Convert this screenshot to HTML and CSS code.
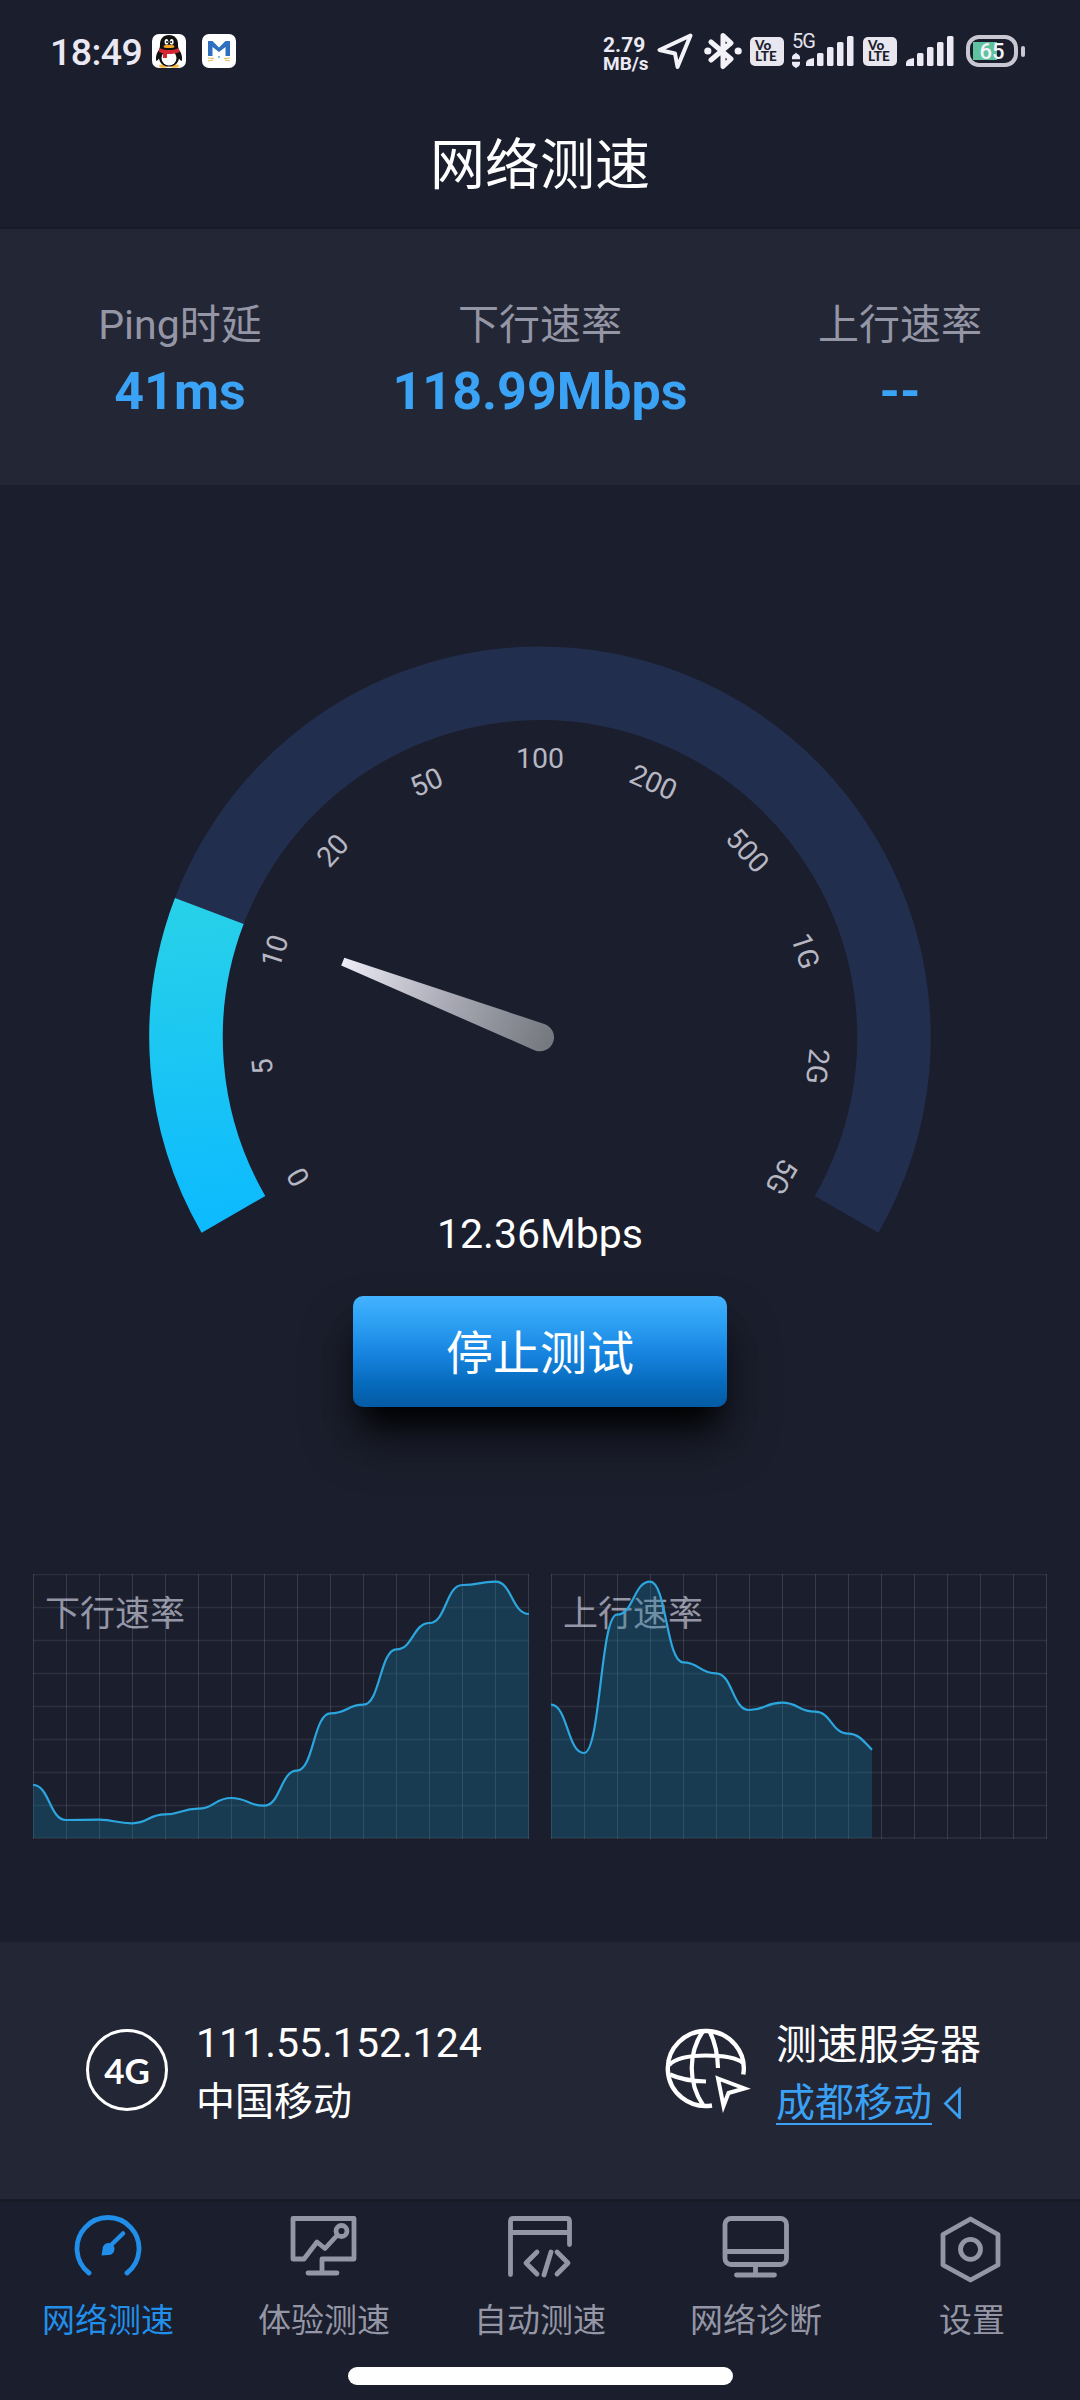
FILE: index.html
```html
<!DOCTYPE html>
<html lang="zh-CN">
<head>
<meta charset="utf-8">
<title>网络测速</title>
<link rel="stylesheet" href="styles.css">
</head>
<body>
<div class="screen">
  <header class="header">
    <div class="status">
      <div class="status-left">
        <span class="clock">18:49</span>
        <svg class="app-icon" viewBox="0 0 34 34">
          <rect width="34" height="34" rx="7" fill="#fff"/>
          <ellipse cx="11.500" cy="32" rx="4.500" ry="1.800" fill="#f5b63c"/><ellipse cx="22.500" cy="32" rx="4.500" ry="1.800" fill="#f5b63c"/>
          <path d="M17 1c-6 0-9 4-9 9 0 2-.2 4-.8 5.500C5 18 3.500 22 4 26.500c1 .8 2-.5 3-2C8 30 12 32.500 17 32.500S26 30 27 24.500c1 1.500 2 2.800 3 2 .5-4.500-1-8.500-3.200-11C26.200 14 26 12 26 10c0-5-3-9-9-9z" fill="#111"/>
          <ellipse cx="17" cy="24" rx="7.500" ry="7.500" fill="#fff"/>
          <ellipse cx="14.500" cy="7.800" rx="1.900" ry="2.900" fill="#fff"/><ellipse cx="19.700" cy="7.800" rx="1.900" ry="2.900" fill="#fff"/>
          <circle cx="15" cy="8" r="1" fill="#111"/><circle cx="19.200" cy="8" r="1" fill="#111"/>
          <ellipse cx="17" cy="12.400" rx="5.500" ry="1.700" fill="#f5a623"/>
          <path d="M7.500 14c6 3 13 3 19 0l1 4c-4 1.800-8 2.200-12.500 2V24h-4v-4.800L7 18z" fill="#d8252f"/>
        </svg>
        <svg class="app-icon app-icon-second" viewBox="0 0 34 34">
          <rect width="34" height="34" rx="7" fill="#fff"/>
          <path d="M6 22V7h4.500l6.500 6.500L23.500 7H28v15h-4.500v-9L17 18l-6.500-5v9z" fill="#2f6fc0"/>
          <path d="M6 24l6 .5M6 27l5-1M28 24l-6 .5M28 27l-5-1" stroke="#e7b94c" stroke-width="1"/>
          <circle cx="17" cy="23" r="1" fill="#5aa7c8"/>
        </svg>
      </div>
      <div class="status-right">
        <div class="net-speed"><span class="net-value">2.79</span><span class="net-unit">MB/s</span></div>
        <svg class="i-send" viewBox="0 0 36 37"><path d="M33.500 2.500L2.500 17l15.500 3.500L20.500 34z" fill="none" stroke="#f2f2f8" stroke-width="4" stroke-linejoin="round"/></svg>
        <svg class="i-bt" viewBox="0 0 38 38"><path d="M7 10l20 17-8 7.500V3.500L27 11 7 28" fill="none" stroke="#f2f2f8" stroke-width="5" stroke-linejoin="round" stroke-linecap="round"/><circle cx="3.800" cy="19" r="3.600" fill="#f2f2f8"/><circle cx="34.200" cy="19" r="3.600" fill="#f2f2f8"/></svg>
        <div class="volte">Vo<br>LTE</div>
        <div class="net-type"><span>5G</span><svg viewBox="0 0 8 17"><path d="M0 7.300a4 4.500 0 0 1 3-5.500L4 .5l1 1.300a4 4.500 0 0 1 3 5.500zM0 9.700h8a4 4.500 0 0 1-3 5.500L4 16.500l-1-1.300a4 4.500 0 0 1-3-5.500z" fill="#eceaf4"/></svg></div>
        <svg class="signal signal-first" viewBox="0 0 48 31"><g fill="#eceaf4"><path d="M0 30v-3q0-4 8-5v8z"/><rect x="11" y="17" width="6.500" height="13" rx="1.500"/><rect x="21" y="11" width="6.500" height="19" rx="1.500"/><rect x="31" y="6" width="6.500" height="24" rx="1.500"/><rect x="41" width="6.500" height="30" rx="1.500"/></g></svg>
        <div class="volte">Vo<br>LTE</div>
        <svg class="signal signal-second" viewBox="0 0 48 31"><g fill="#eceaf4"><path d="M0 30v-3q0-4 8-5v8z"/><rect x="11" y="17" width="6.500" height="13" rx="1.500"/><rect x="21" y="11" width="6.500" height="19" rx="1.500"/><rect x="31" y="6" width="6.500" height="24" rx="1.500"/><rect x="41" width="6.500" height="30" rx="1.500"/></g></svg>
        <div class="battery"><span>65</span></div><i class="battery-cap"></i>
      </div>
    </div>
    <h1 class="title">网络测速</h1>
  </header>

  <section class="stats">
    <div class="stat"><span class="stat-label">Ping时延</span><span class="stat-value">41ms</span></div>
    <div class="stat"><span class="stat-label">下行速率</span><span class="stat-value">118.99Mbps</span></div>
    <div class="stat"><span class="stat-label">上行速率</span><span class="stat-value">--</span></div>
  </section>

  <main class="meter">
    <svg class="gauge" viewBox="0 485 1080 760">
      <defs>
        <linearGradient id="fill" gradientUnits="userSpaceOnUse" x1="200" y1="898" x2="230" y2="1231"><stop offset="0" stop-color="#28d1e8"/><stop offset="1" stop-color="#0cbaff"/></linearGradient>
        <linearGradient id="needle" gradientUnits="userSpaceOnUse" x1="343" y1="962" x2="550" y2="1041"><stop offset="0" stop-color="#ecebf6"/><stop offset=".5" stop-color="#a9aab5"/><stop offset="1" stop-color="#75787f"/></linearGradient>
      </defs>
      <path d="M233.430 1214.300A354 354 0 1 1 846.570 1214.300" fill="none" stroke="#222e4e" stroke-width="73.500"/>
      <path d="M233.430 1214.300A354 354 0 0 1 209.290 911" fill="none" stroke="url(#fill)" stroke-width="73.500"/>
      <path d="M344.300 957.800L545 1024.200A14 14 0 0 1 535 1050.400L341.200 965.500z" fill="url(#needle)"/>
      <g class="ticks">
        <text x="540" y="768" transform="rotate(-120 540 1037.300)">0</text>
        <text x="540" y="768" transform="rotate(-96 540 1037.300)">5</text>
        <text x="540" y="768" transform="rotate(-72 540 1037.300)">10</text>
        <text x="540" y="768" transform="rotate(-48 540 1037.300)">20</text>
        <text x="540" y="768" transform="rotate(-24 540 1037.300)">50</text>
        <text x="540" y="768">100</text>
        <text x="540" y="768" transform="rotate(24 540 1037.300)">200</text>
        <text x="540" y="768" transform="rotate(48 540 1037.300)">500</text>
        <text x="540" y="768" transform="rotate(72 540 1037.300)">1G</text>
        <text x="540" y="768" transform="rotate(96 540 1037.300)">2G</text>
        <text x="540" y="768" transform="rotate(120 540 1037.300)">5G</text>
      </g>
    </svg>
    <div class="speed">12.36Mbps</div>
    <button class="stop">停止测试</button>
  </main>

  <section class="charts">
    <figure class="chart">
      <figcaption>下行速率</figcaption>
      <svg viewBox="0 0 496 265">
        <path class="grid-v" d="M.5 0v265M33.500 0v265M66.500 0v265M99.500 0v265M132.500 0v265M165.500 0v265M198.500 0v265M231.500 0v265M264.500 0v265M297.500 0v265M330.500 0v265M363.500 0v265M396.500 0v265M429.500 0v265M462.500 0v265M495.500 0v265"/>
        <path class="grid-h" d="M0 .5h496M0 33.500h496M0 66.500h496M0 99.500h496M0 132.500h496M0 165.500h496M0 198.500h496M0 231.500h496M0 264h496"/>
        <path class="area" d="M0 211C16.500 211 16.500 246 33 246S49.500 245.700 66 245.700 82.500 249.300 99 249.300 115.500 240.300 132 240.300 148.500 234.700 165 234.700 181.500 224 198 224 214.500 231.700 231 231.700 247.500 196.700 264 196.700 280.500 139.300 297.500 139.300 314 130.700 330.500 130.700 347 75.300 363.500 75.300 380 49 396.500 49 413 11 429.500 11 446 7.700 462.500 7.700 479 40 496 40V264H0z"/>
        <path class="line" d="M0 211C16.500 211 16.500 246 33 246S49.500 245.700 66 245.700 82.500 249.300 99 249.300 115.500 240.300 132 240.300 148.500 234.700 165 234.700 181.500 224 198 224 214.500 231.700 231 231.700 247.500 196.700 264 196.700 280.500 139.300 297.500 139.300 314 130.700 330.500 130.700 347 75.300 363.500 75.300 380 49 396.500 49 413 11 429.500 11 446 7.700 462.500 7.700 479 40 496 40"/>
      </svg>
    </figure>
    <figure class="chart">
      <figcaption>上行速率</figcaption>
      <svg viewBox="0 0 496 265">
        <path class="grid-v" d="M.5 0v265M33.500 0v265M66.500 0v265M99.500 0v265M132.500 0v265M165.500 0v265M198.500 0v265M231.500 0v265M264.500 0v265M297.500 0v265M330.500 0v265M363.500 0v265M396.500 0v265M429.500 0v265M462.500 0v265M495.500 0v265"/>
        <path class="grid-h" d="M0 .5h496M0 33.500h496M0 66.500h496M0 99.500h496M0 132.500h496M0 165.500h496M0 198.500h496M0 231.500h496M0 264h496"/>
        <path class="area" d="M0 130.700C16.500 130.700 16.500 179 33 179S49.500 40.700 66 40.700 82.500 7.700 99 7.700 115.500 88.300 132 88.300 148.500 99.300 165 99.300 181.500 136 198 136 214.500 128.700 231 128.700 247.500 137.700 264 137.700 280.500 159.700 297.500 159.700C308 159.700 313 168 321 175.700V264H0z"/>
        <path class="line" d="M0 130.700C16.500 130.700 16.500 179 33 179S49.500 40.700 66 40.700 82.500 7.700 99 7.700 115.500 88.300 132 88.300 148.500 99.300 165 99.300 181.500 136 198 136 214.500 128.700 231 128.700 247.500 137.700 264 137.700 280.500 159.700 297.500 159.700C308 159.700 313 168 321 175.700"/>
      </svg>
    </figure>
  </section>

  <section class="info">
    <div class="badge-4g">4G</div>
    <div class="info-text info-ip"><span class="line-one">111.55.152.124</span><span class="line-two">中国移动</span></div>
    <svg class="globe" viewBox="5 8 90 90" fill="none" stroke="#fff" stroke-width="4.400">
      <path d="M87.300 59.500A38 37.500 0 1 0 56 90.500"/>
      <path d="M47 16C32 38 32 68 47 90M53.500 16Q61.500 32 62 53M13 50Q22 40.500 50 40.500T87 48M14 59.500Q28 66 50 66.500" stroke-width="4.200"/>
      <path d="M62 63.500L88.500 73.500 72.500 78 67.500 91z" stroke-width="4"/>
    </svg>
    <div class="info-text"><span class="line-one">测速服务器</span>
      <div class="server"><a class="line-two">成都移动</a><svg viewBox="0 0 19 32"><path d="M16.500 2.500L2.500 16.500 16.500 30.500z" fill="none" stroke="#3aa0f3" stroke-width="2.800"/></svg></div>
    </div>
  </section>

  <nav class="tabs">
    <div class="tab active">
      <svg viewBox="0 0 68 70"><path d="M15 59A31 31 0 1 1 53 59" stroke-width="4.800"/><path d="M34.500 33.500L49 19.500" stroke-width="4.500"/><path d="M27.500 41.500l1-6a6 6 0 1 1 5.500 5.500z" fill="currentColor" stroke="none"/></svg>
      <span>网络测速</span>
    </div>
    <div class="tab">
      <svg viewBox="0 0 68 70"><path d="M32 58V45H64V4.500H3V45H14L27 28l8 6.500L46.500 22M18 59H47"/><circle cx="51.500" cy="17" r="5.500"/></svg>
      <span>体验测速</span>
    </div>
    <div class="tab">
      <svg viewBox="0 0 68 70"><path d="M4.500 60.500V7.500q0-3 3-3H60.500q3 0 3 3V30.500M5 18.500H63M31 38L20 49 31 60M45 38L38 61M51 38L62 49 51 60"/></svg>
      <span>自动测速</span>
    </div>
    <div class="tab">
      <svg viewBox="0 0 68 70"><rect x="3" y="4.500" width="61.500" height="46" rx="6"/><path d="M4 37.500H64M33.500 51V60M14.500 61H52.500"/></svg>
      <span>网络诊断</span>
    </div>
    <div class="tab">
      <svg viewBox="0 0 68 70"><path d="M32.500 5L60 20.500V51L32.500 66 5 51V20.500z"/><circle cx="32.500" cy="35.300" r="10"/></svg>
      <span>设置</span>
    </div>
  </nav>
  <div class="home-area"><div class="home-bar"></div></div>
</div>
</body>
</html>
```

FILE: styles.css
```css
* { box-sizing: border-box; }
body {
  margin: 0;
  background: #1b1e2c;
  color: #fff;
  font-family: Roboto, "Noto Sans CJK SC", sans-serif;
}
.screen { width: 1080px; height: 2400px; display: flex; flex-direction: column; overflow: hidden; }

/* header */
.header { height: 229px; border-bottom: 2px solid #181a25; display: flex; flex-direction: column; }
.status { height: 102px; display: flex; justify-content: space-between; align-items: center; padding: 0 55px 0 50px; }
.status-left, .status-right { display: flex; align-items: center; }
.clock { width: 102px; font-size: 37.500px; line-height: 44px; padding-top: 2px; font-weight: 500; color: #eae8f3; letter-spacing: -.6px; }
.app-icon { width: 34px; height: 34px; }
.app-icon-second { margin-left: 16px; }
.net-speed { width: 54px; display: flex; flex-direction: column; color: #eceaf4; font-weight: 700; padding-top: 7px; }
.net-value { font-size: 21px; line-height: 19px; }
.net-unit { font-size: 19px; line-height: 18px; }
.i-send { width: 36px; height: 37px; margin-right: 11px; }
.i-bt { width: 38px; height: 38px; margin-right: 8px; }
.volte {
  width: 34px; height: 29px; border-radius: 5px; background: #e8e6ef; color: #1b1e2c;
  font: 900 13.500px/11.500px Lato, sans-serif; padding: 3px 0 0 5px;
}
.net-type { width: 22px; height: 42px; margin-left: 8px; display: flex; flex-direction: column; font-size: 20px; line-height: 22px; color: #e4e3ec; letter-spacing: -1px; white-space: nowrap; }
.net-type svg { width: 8px; height: 17px; }
.signal { width: 48px; height: 31px; }
.signal-first { margin: 0 9px 0 -8px; }
.signal-second { margin: 0 12px 0 9px; }
.battery {
  width: 52px; height: 32px; border: 4px solid #c9c8d2; border-radius: 13px;
  background: linear-gradient(90deg, #5fc3a0 0 24px, transparent 24px) 3px 3px / 38px 18px no-repeat;
  display: flex; align-items: center; justify-content: center;
  font-size: 22px; font-weight: 500; line-height: 24px; color: #f4f4fa;
}
.battery span { padding-top: 2px; }
.battery-cap { width: 4px; height: 11px; border-radius: 2px; background: #c9c8d2; margin-left: 3px; }
.title { margin: 23px 0 0; text-align: center; font-size: 55px; line-height: 80px; font-weight: 400; }

/* summary */
.stats { height: 256px; background: #232635; display: grid; grid-template-columns: repeat(3, 1fr); padding-top: 66px; }
.stat { display: flex; flex-direction: column; align-items: center; }
.stat-label { font-size: 41px; line-height: 60px; color: #9496a6; }
.stat-value { font-size: 52px; line-height: 62px; margin-top: 6px; font-weight: 700; color: #3ba3f5; }

/* gauge */
.meter { height: 1089px; display: flex; flex-direction: column; align-items: center; }
.gauge { width: 1080px; height: 760px; flex: none; }
.ticks { font-size: 28.500px; fill: #b6b7c2; text-anchor: middle; }
.speed { margin-top: -36px; font-size: 41px; line-height: 50px; }
.stop {
  margin-top: 37px; width: 374px; height: 111px; border: 0; border-radius: 10px; color: #fff;
  background: linear-gradient(#43b3ff 0%, #2c9ff2 25%, #1784e0 52%, #0568b8 82%, #055aa4 100%);
  box-shadow: 0 26px 28px -12px #000, 0 32px 52px 0 rgba(0, 0, 0, .4);
  font: 400 47px/68px Roboto, "Noto Sans CJK SC", sans-serif; padding: 5px 0 0;
}

/* charts */
.charts { height: 368px; display: flex; gap: 22px; padding: 0 33px; }
.chart { margin: 0; width: 496px; height: 265px; display: grid; }
.chart figcaption { grid-area: 1 / 1; padding: 15px 0 0 12px; font-size: 35px; line-height: 52px; color: #9496a6; }
.chart svg { grid-area: 1 / 1; width: 496px; height: 265px; z-index: 1; }
.grid-v { stroke: rgba(255, 255, 255, .13); stroke-width: 1; }
.grid-h { stroke: rgba(255, 255, 255, .08); stroke-width: 1.500; }
.area { fill: rgba(23, 126, 166, .31); }
.line { fill: none; stroke: #2ba6df; stroke-width: 2.200; }

/* connection */
.info { height: 257px; background: #232635; display: flex; padding: 0 0 0 86px; align-items: flex-start; }
.badge-4g {
  width: 82px; height: 82px; margin-top: 87px; border: 3.500px solid #fff; border-radius: 50%;
  display: flex; align-items: center; justify-content: center; font: 700 35px/40px Lato, sans-serif;
}
.info-text { display: flex; flex-direction: column; margin: 73px 0 0 28px; }
.info-ip { width: 465px; margin-top: 71px; }
.info-ip .line-two { margin-top: 1px; }
.line-one { font-size: 41px; line-height: 60px; }
.line-two { font-size: 39px; line-height: 56px; }
.globe { width: 90px; height: 90px; margin-top: 81px; }
.globe + .info-text { margin-left: 25px; }
.server { display: flex; align-items: center; gap: 11px; color: #3aa0f3; }
.server a { height: 50px; line-height: 57px; border-bottom: 2px solid #3aa0f3; }
.server svg { width: 19px; height: 32px; margin-top: 6px; }

/* bottom tabs */
.tabs { height: 150px; border-top: 3px solid #181a25; display: grid; grid-template-columns: repeat(5, 1fr); }
.tab { display: flex; flex-direction: column; align-items: center; padding-top: 12px; color: #9496a6; }
.tab svg { width: 68px; height: 70px; fill: none; stroke: currentColor; stroke-width: 4.800; stroke-linecap: round; stroke-linejoin: round; }
.tab span { font-size: 33px; line-height: 48px; margin-top: 13px; }
.tab.active { color: #218fea; }
.home-area { flex: 1; display: flex; justify-content: center; padding-top: 18px; }
.home-bar { width: 385px; height: 18px; border-radius: 9px; background: #fff; }
```
